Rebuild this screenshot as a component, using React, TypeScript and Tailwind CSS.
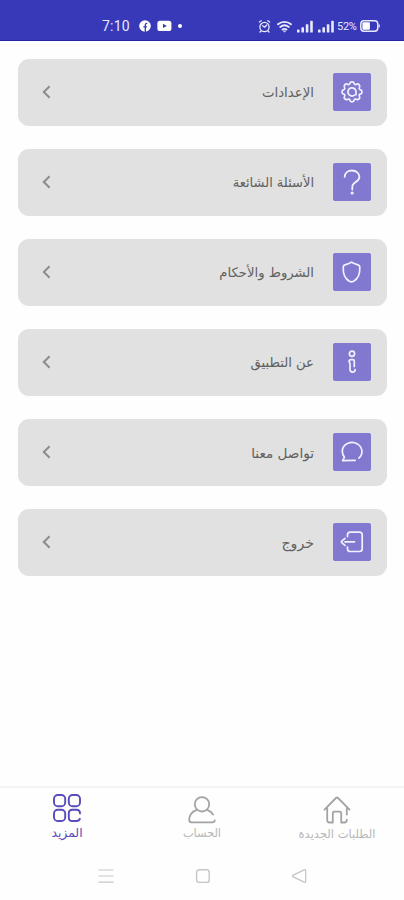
import type { ReactNode } from 'react';

const line = {
  fill: 'none',
  stroke: 'currentColor',
  strokeLinecap: 'round' as const,
  strokeLinejoin: 'round' as const,
};

const GearIcon = () => (
  <svg width="24" height="24" viewBox="0 0 24 24" {...line} strokeWidth="1.7">
    <path d="M9.8 3.6c.5-2.4 3.9-2.4 4.4 0 .3 1 1.1 1.3 2 .8 2.1-1.3 4.4 1 3.2 3.2-.5.8-.2 1.7.8 2 2.4.6 2.4 4 0 4.5-1 .3-1.3 1.1-.8 2 1.2 2.1-1 4.4-3.2 3.2-.9-.5-1.7-.2-2 .8-.5 2.4-3.9 2.4-4.4 0-.3-1-1.2-1.3-2-.8-2.2 1.2-4.5-1.1-3.2-3.2.5-.9.1-1.7-.8-2-2.4-.5-2.4-3.9 0-4.5.9-.3 1.3-1.2.8-2C3.3 5.4 5.6 3.1 7.8 4.4c.8.5 1.7.2 2-.8Z" />
    <path d="M14.6 15.1A4.1 4.1 0 1 1 16.1 12l-.1 2.6" />
  </svg>
);
const QuestionIcon = () => (
  <svg width="24" height="28" viewBox="0 0 24 28" {...line} strokeWidth="1.8">
    <path d="M4.7 8.8C4.9 4.9 8 2.5 12 2.5c4.2 0 7.4 2.8 7.4 6.4 0 5.4-7.1 5-7.1 10v2.6" />
    <circle cx="12.2" cy="25" r=".7" />
  </svg>
);
const ShieldIcon = () => (
  <svg width="24" height="24" viewBox="0 0 24 24" {...line} strokeWidth="1.7">
    <path d="M11.5 2.2c-1.8 1.4-3.6 2-5.8 2.4-1.8.3-2.4 1-2.5 2.7-.3 7.8 1.9 11.7 6.2 14 1.6.8 2.6.8 4.2 0 4.3-2.3 6.5-6.2 6.2-14-.1-1.7-.7-2.4-2.5-2.7-2.2-.4-4-1-5.8-2.4Z" />
  </svg>
);
const InfoIcon = () => (
  <svg width="24" height="24" viewBox="0 0 24 24" {...line} strokeWidth="1.7">
    <circle cx="12" cy="3.8" r="2.6" />
    <path d="M12.7 9.6h-1.4c-1.5 0-2.2.7-2.2 1.9s.9 1.3.9 2.3v5.4c0 3.8 5.4 3.8 5.2.3m-2.5-9.9c1 0 1.6.6 1.6 1.6v5.2" />
  </svg>
);
const ChatIcon = () => (
  <svg width="24" height="24" viewBox="0 0 24 24" {...line} strokeWidth="1.7">
    <path d="M18.9 18.2c4.7-4.3 3.7-11.1-1.5-14.3C10.9.1 2.3 4.3 2.3 11.4c0 2.6 1 4.4 2.2 5.8l-1.9 3.5 12.6-.4" />
  </svg>
);
const ExitIcon = () => (
  <svg width="24" height="24" viewBox="0 0 24 24" {...line} strokeWidth="1.7">
    <path d="M7.5 6.6V4.8c0-1.7 1-2.7 2.7-2.7h9.2c1.7 0 2.8 1 2.8 2.7v14c0 1.7-1.1 2.7-2.8 2.7h-9.2c-1.7 0-2.7-1-2.7-2.7V17M14.5 11.8H5M5 8.4 1.8 11.1c-.6.5-.6 1.1 0 1.6L5 15.4" />
  </svg>
);

const rows: { label: string; size: string; icon: ReactNode }[] = [
  { label: 'الإعدادات', size: 'text-[13.3px]', icon: <GearIcon /> },
  { label: 'الأسئلة الشائعة', size: 'text-[13px]', icon: <QuestionIcon /> },
  { label: 'الشروط والأحكام', size: 'text-[13.2px]', icon: <ShieldIcon /> },
  { label: 'عن التطبيق', size: 'text-[13.2px]', icon: <InfoIcon /> },
  { label: 'تواصل معنا', size: 'text-[13.6px]', icon: <ChatIcon /> },
  { label: 'خروج', size: 'text-[14.2px]', icon: <ExitIcon /> },
];

const Signal = () => (
  <svg width="17" height="13" viewBox="0 0 17 13" fill="currentColor">
    <rect x="0" y="9.5" width="2.6" height="3" rx=".6" />
    <rect x="4.4" y="7.2" width="2.6" height="5.3" rx=".6" />
    <rect x="8.8" y="4.2" width="2.6" height="8.3" rx=".6" />
    <rect x="13.2" y=".8" width="2.6" height="11.7" rx=".6" />
  </svg>
);

function StatusBar() {
  return (
    <header dir="ltr" className="flex h-[41px] shrink-0 items-center border-b border-[#2423a0] bg-[#3739b8] pt-[12px] pl-[102px] text-[#e8e8ff]">
      <span className="w-[37px] font-['Roboto',sans-serif] text-[14px] leading-none tracking-[0.2px]">7:10</span>
      <svg width="12" height="12" viewBox="0 0 12 12" className="text-white">
        <circle cx="6" cy="6" r="5.8" fill="currentColor" />
        <path d="M6.3 12V5.1c0-1.3.6-1.9 2-1.8M4.4 6.8h3.5" fill="none" stroke="#3739b8" strokeWidth="1.3" />
      </svg>
      <svg width="15" height="12" viewBox="0 0 15 12" className="ml-[6px]">
        <rect x=".4" y=".7" width="14" height="10.4" rx="2.6" fill="#fff" />
        <path d="m6 3.7 3.8 2.2L6 8.1z" fill="#3739b8" />
      </svg>
      <span className="ml-[6px] size-[4px] rounded-full bg-white" />
      <svg width="13" height="13" viewBox="0 0 13 13" {...line} strokeWidth="1.3" className="ml-[76px]">
        <circle cx="6.5" cy="7" r="4.6" />
        <path d="m1.4 2 1.8-1.2m6.6 0L11.6 2M4.6 5.8l2 1.4L8.8 5M3 11l-1 1m8-1 1 1" />
      </svg>
      <svg width="15" height="13" viewBox="0 0 15 13" {...line} strokeWidth="1.8" className="ml-[6px]">
        <path d="M1 4.3c3.8-3.2 9.2-3.2 13 0M3.2 7c2.6-2.1 6-2.1 8.6 0M5.5 9.5c1.3-.9 2.7-.9 4 0" />
        <path d="m6.5 11.2 1 .8 1-.8z" fill="currentColor" strokeWidth=".7" />
      </svg>
      <span className="ml-[5px]"><Signal /></span>
      <span className="ml-[4px]"><Signal /></span>
      <span className="ml-[2px] w-[21px] whitespace-nowrap font-['Roboto',sans-serif] text-[11px] leading-none tracking-[-0.3px]">52%</span>
      <svg width="20" height="12" viewBox="0 0 20 12" className="ml-[2px]">
        <rect x=".8" y=".8" width="17" height="10.4" rx="3.2" fill="none" stroke="currentColor" strokeWidth="1.5" />
        <rect x="2.4" y="2.2" width="7.5" height="7.6" rx="1" fill="#fff" />
        <path d="M19.2 4.5v3" stroke="currentColor" strokeWidth="1.2" />
      </svg>
    </header>
  );
}

export default function App() {
  return (
    <div dir="rtl" className="flex h-[900px] w-[404px] flex-col bg-[#fefefe] font-['DejaVu_Sans',sans-serif]">
      <StatusBar />
      <main className="flex flex-1 flex-col gap-[23px] pt-[18px] pr-[17px] pl-[18px]">
        {rows.map((row) => (
          <button key={row.label} className="flex h-[67px] shrink-0 items-center rounded-[11px] bg-[#e1e1e1] pr-[16px] pl-[22px] text-start">
            <span className="mb-px flex size-[38px] items-center justify-center rounded-[2px] bg-[#8179d0] text-[#f3f0ff]">{row.icon}</span>
            <span className={`mr-[19px] flex-1 whitespace-nowrap leading-[20px] text-[#606060] ${row.size}`}>{row.label}</span>
            <svg width="12" height="16" viewBox="0 0 12 16" fill="none" stroke="#8c8c8c" strokeWidth="2" className="mb-px">
              <path d="M9.6 2.2 3.8 8l5.8 5.8" />
            </svg>
          </button>
        ))}
      </main>
      <nav className="flex h-[66px] shrink-0 border-t-2 border-[#f4f4f4] text-[#a3a3a3]">
        <div className="flex w-[134px] flex-col items-center pt-[7px]">
          <svg width="30" height="30" viewBox="0 0 30 30" {...line} strokeWidth="1.8">
            <path d="M2.5 14.7 14 3c.7-.7 1.3-.7 2 0l11.5 11.7M5.2 12.8V25c0 1.7.9 2.5 2.5 2.5h3.1V18c0-.9.5-1.4 1.4-1.4h5.6c.9 0 1.4.5 1.4 1.4v9.5h3.1c1.7 0 2.5-.8 2.5-2.8M24.8 12.8v6.7" />
          </svg>
          <span className="whitespace-nowrap text-[11.5px] leading-[18px] text-[#b7b7b7]">الطلبات الجديدة</span>
        </div>
        <div className="flex w-[136px] flex-col items-center pt-[7px]">
          <svg width="30" height="30" viewBox="0 0 30 30" {...line} strokeWidth="1.8">
            <circle cx="15" cy="9.3" r="7.2" />
            <path d="M9.2 15.2C5 17 2.2 20.4 2.2 24.8c0 1.7.8 2.6 2.4 2.6h20.8c1.4 0 2.3-.8 2.4-2.1M20.8 15.2c2.3 1 4.1 2.4 5.3 4.3" />
          </svg>
          <span className="text-[11.3px] leading-[18px] text-[#b7b7b7]">الحساب</span>
        </div>
        <div className="flex w-[134px] flex-col items-center pt-[5px] text-[#574cbb]">
          <svg width="30" height="30" viewBox="0 0 30 30" {...line} strokeWidth="1.9">
            <rect x="2" y="2" width="11.2" height="11.2" rx="3.8" />
            <rect x="16.8" y="2" width="11.2" height="11.2" rx="3.8" />
            <rect x="2" y="16.8" width="11.2" height="11.2" rx="3.8" />
            <path d="M28 20.4c0-2.4-1.2-3.6-3.6-3.6h-4c-2.4 0-3.6 1.2-3.6 3.6v4c0 2.4 1.2 3.6 3.6 3.6h4c1.8 0 3.1-.7 3.5-2.2" />
          </svg>
          <span className="mt-px text-[12.4px] leading-[18px]">المزيد</span>
        </div>
      </nav>
      <footer dir="ltr" className="flex h-[48px] shrink-0 items-center justify-between pr-[97px] pl-[98px] text-[#c6c6c6]">
        <svg width="16" height="16" viewBox="0 0 16 16" fill="none" stroke="currentColor" strokeWidth="1.2"><path d="M.5 2h15M.5 8h15M.5 14.2h15" /></svg>
        <svg width="16" height="16" viewBox="0 0 16 16" fill="none" stroke="currentColor" strokeWidth="1.4"><rect x="1.6" y="1.8" width="12.6" height="12.6" rx="2.5" /></svg>
        <svg width="16" height="16" viewBox="0 0 16 16" {...line} strokeWidth="1.3"><path d="M13.2 1.8 2.2 7.2c-1 .5-1 1.2 0 1.7l11 5.3c.9.4 1.5.1 1.5-.9V2.7c0-1-.6-1.3-1.5-.9Z" /></svg>
      </footer>
    </div>
  );
}
